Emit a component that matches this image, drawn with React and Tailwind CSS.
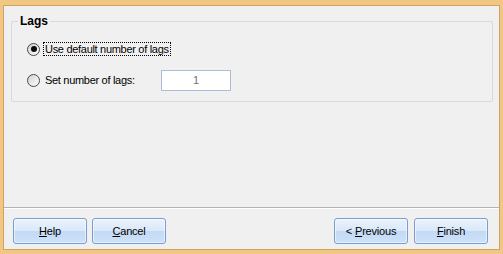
import React from "react";

function Radio({ checked }) {
  return (
    <span className="relative flex h-[13px] w-[13px] shrink-0 items-center justify-center rounded-full border border-[#4a4a4a] bg-[linear-gradient(135deg,#d0d0d0,#ffffff)]">
      {checked && <span className="h-[6px] w-[6px] rounded-full bg-[#0c0c0c]" />}
    </span>
  );
}

function Btn({ children }) {
  return (
    <button className="flex h-[26px] w-[74px] items-center justify-center rounded-[3px] border border-[#7a9dcf] bg-[linear-gradient(to_bottom,#eaf3fd_0%,#dae8f9_48%,#c3daf5_52%,#cde2fa_100%)] text-[11px] tracking-[-0.2px] text-black shadow-[inset_0_0_0_1px_rgba(255,255,255,0.55)]">
      {children}
    </button>
  );
}

export default function App() {
  return (
    <div className="h-[254px] w-[503px] bg-[#f1c781] pb-[4px] pl-[3px] pr-[3px] pt-[5px] font-['Liberation_Sans',Arial,sans-serif] text-[11px] leading-[14px] text-black">
      <div className="flex h-full flex-col border border-[#cfa462] bg-[#f0f0f0]">
        <div className="flex-1">
          <fieldset className="ml-[7px] mr-[6px] mt-[8px] rounded-[2px] border border-[#d9d9d9] pb-[10px] pl-[6px] pt-[10px]">
            <legend className="px-[2px] text-[12px] font-bold leading-[14px]">Lags</legend>
            <div className="ml-[9px] flex flex-col gap-[9px] tracking-[-0.3px]">
              <div className="flex h-[22px] items-center">
                <Radio checked />
                <span className="ml-[3px] border border-dotted border-black px-[1px] leading-[12px]">
                  Use default number of lags
                </span>
              </div>
              <div className="flex h-[22px] items-center">
                <Radio />
                <span className="ml-[5px] w-[116px] shrink-0">Set number of lags:</span>
                <div className="flex h-[21px] w-[70px] items-center justify-center border border-[#abbdd7] bg-white text-[#707070]">
                  1
                </div>
              </div>
            </div>
          </fieldset>
        </div>
        <div className="h-[1px] bg-[#b4b4b4]" />
        <div className="h-[1px] bg-white" />
        <div className="flex h-[40px] items-start justify-between pl-[9px] pr-[11px] pt-[9px]">
          <div className="flex gap-[5px]">
            <Btn>
              <span className="underline">H</span>elp
            </Btn>
            <Btn>
              <span className="underline">C</span>ancel
            </Btn>
          </div>
          <div className="flex gap-[6px]">
            <Btn>
              &lt; <span className="ml-[3px] underline">P</span>revious
            </Btn>
            <Btn>
              <span className="underline">F</span>inish
            </Btn>
          </div>
        </div>
      </div>
    </div>
  );
}
